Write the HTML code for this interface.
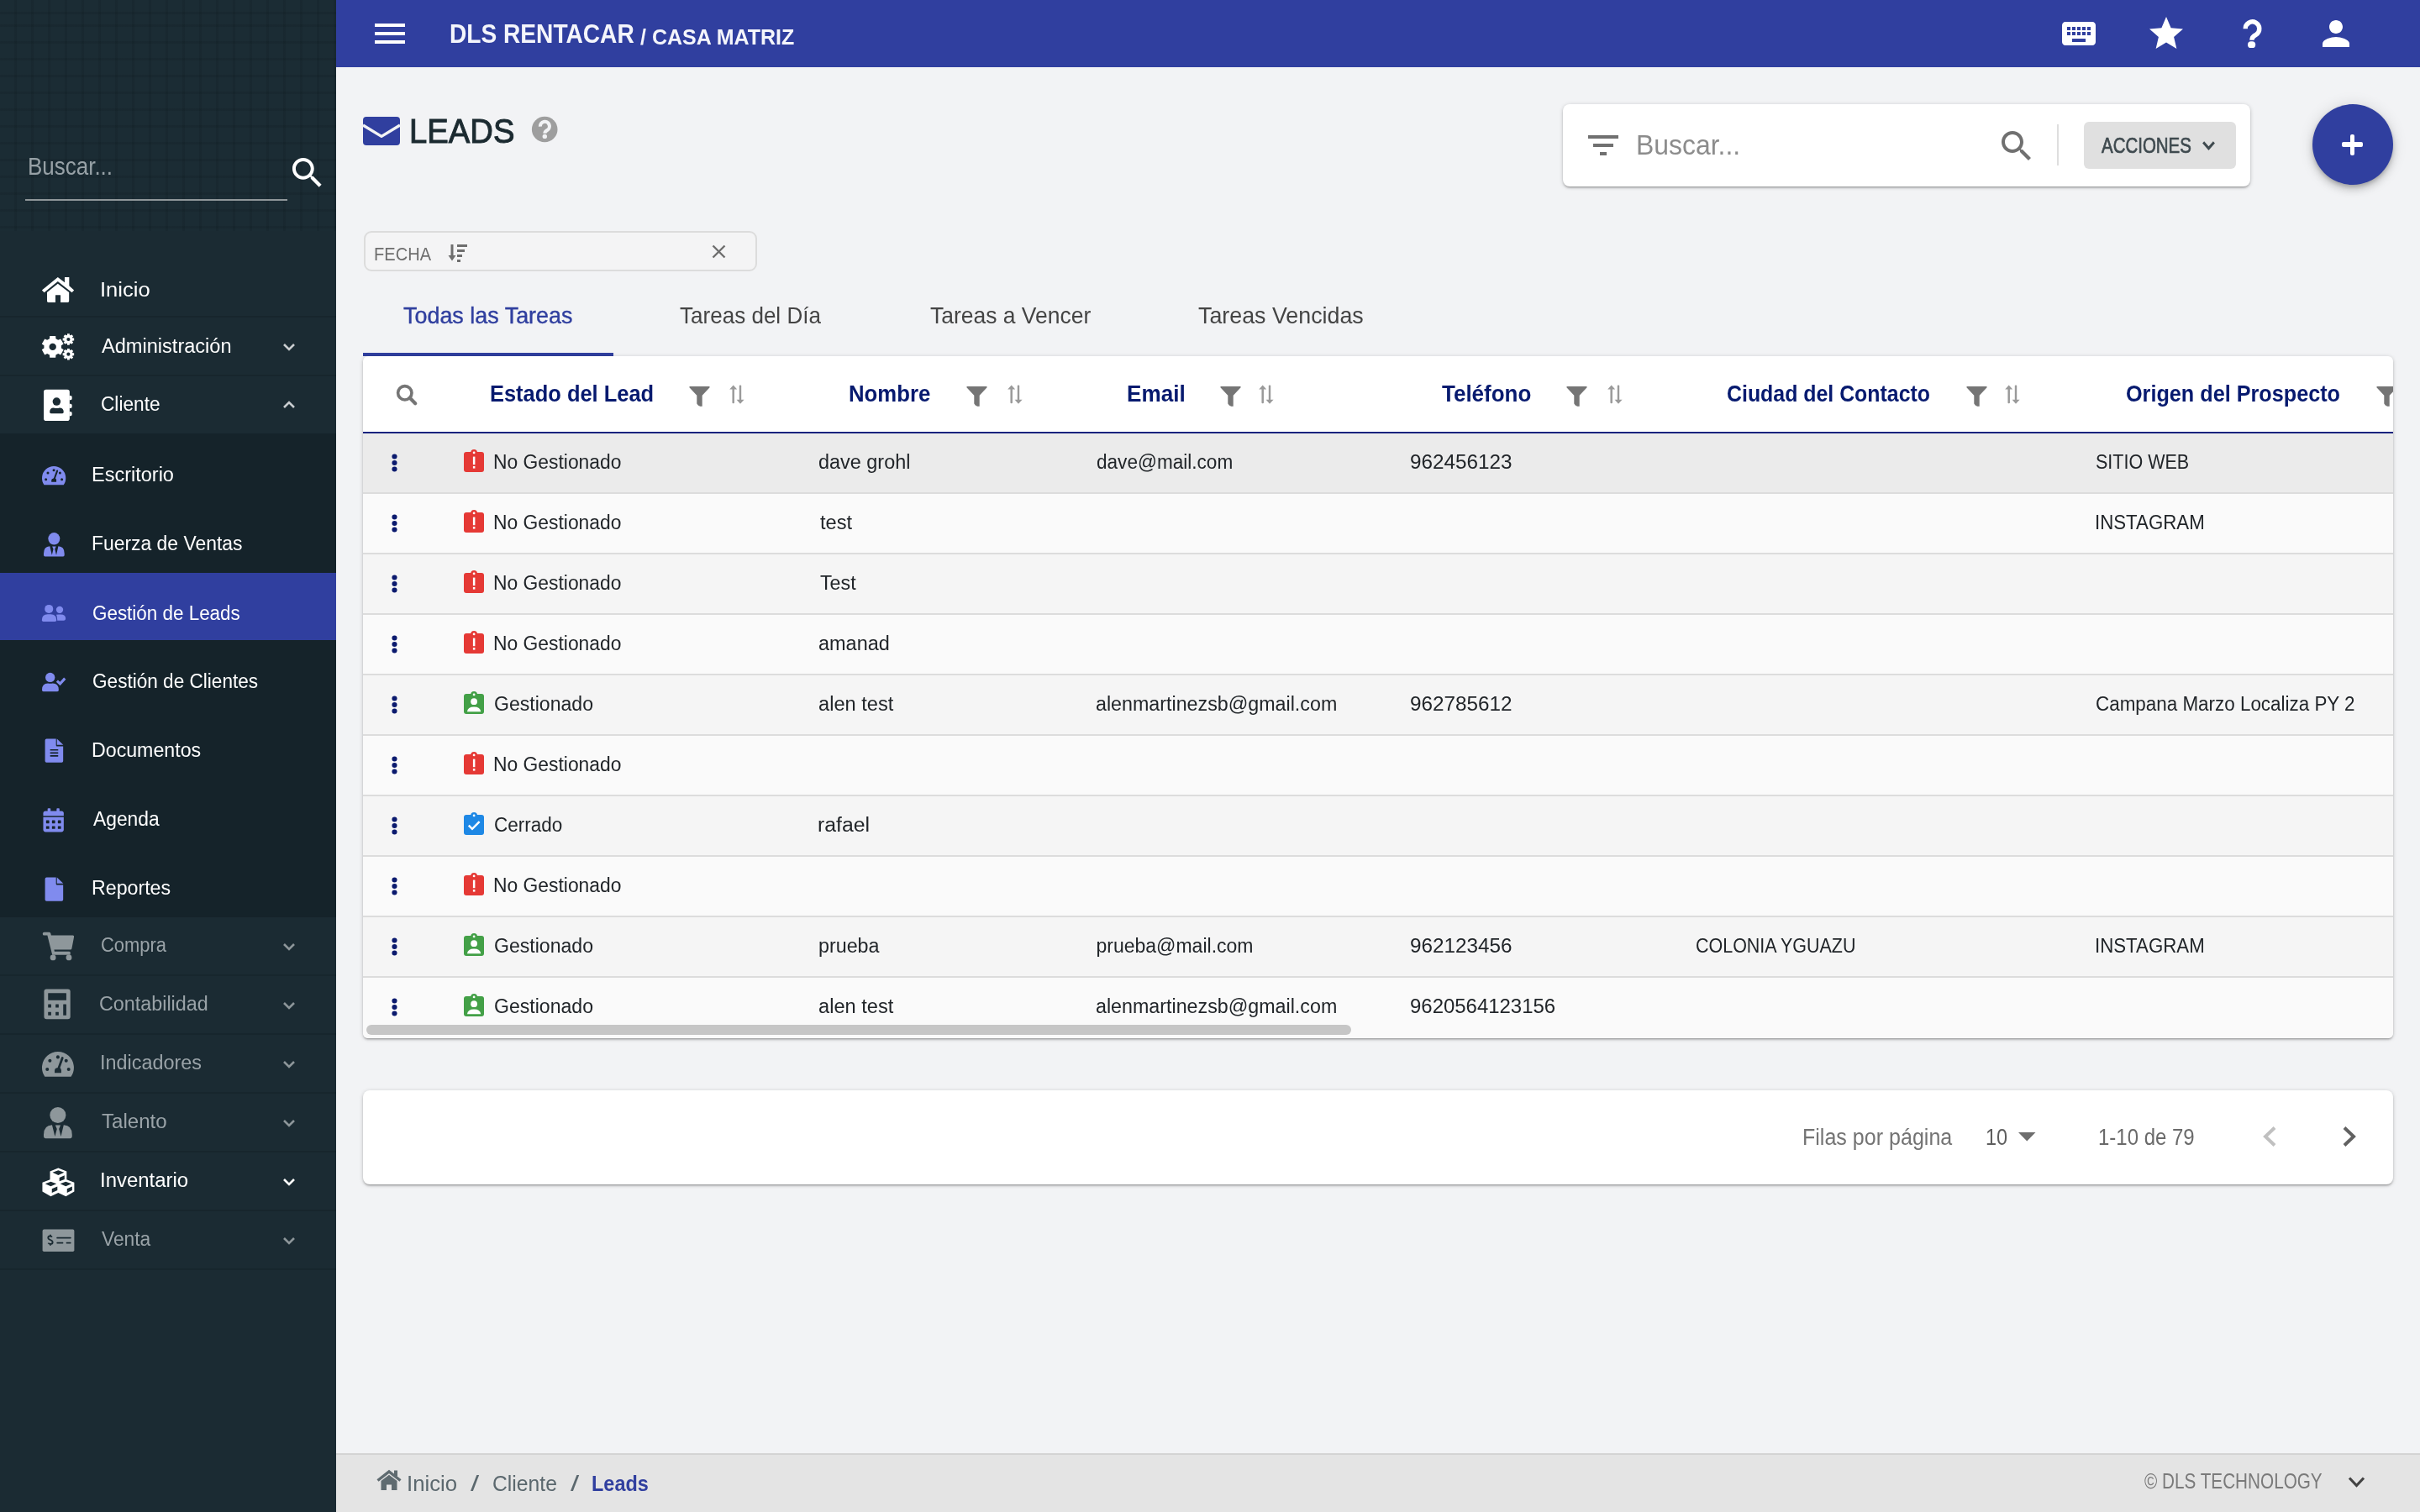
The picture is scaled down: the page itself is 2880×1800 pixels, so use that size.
<!DOCTYPE html>
<html><head><meta charset="utf-8"><title>Leads</title>
<style>
html,body{margin:0;padding:0;}
body{width:2880px;height:1800px;overflow:hidden;position:relative;background:#f2f3f5;font-family:"Liberation Sans",sans-serif;}
.b{position:absolute;}
.i{position:absolute;overflow:visible;}
.t{position:absolute;white-space:nowrap;transform-origin:0 0;}
</style></head><body>
<div class="b" style="left:0px;top:0px;width:400px;height:1800px;background:#1b2b33"></div>
<div class="b" style="left:0px;top:0px;width:400px;height:275px;background-color:#1b2c34;background-image:repeating-linear-gradient(90deg, rgba(10,20,25,0.16) 0 3px, transparent 3px 20px),repeating-linear-gradient(0deg, rgba(10,20,25,0.16) 0 3px, transparent 3px 20px);background-position:17px 17px"></div>
<div class="b" style="left:30px;top:237px;width:312px;height:2px;background:#8f9699"></div>
<svg class="i" style="left:341.8px;top:181.5px;width:47.6px;height:47.6px;" viewBox="0 0 24 24" preserveAspectRatio="none"><path fill="#fff" d="M15.5 14h-.79l-.28-.27C15.41 12.59 16 11.11 16 9.5 16 5.91 13.09 3 9.5 3S3 5.91 3 9.5 5.91 16 9.5 16c1.61 0 3.09-.59 4.23-1.57l.27.28v.79l5 4.99L20.49 19l-4.99-5zm-6 0C7.01 14 5 11.99 5 9.5S7.01 5 9.5 5 14 7.01 14 9.5 11.99 14 9.5 14z"/></svg>
<div class="b" style="left:0px;top:376px;width:400px;height:2px;background:#17262d"></div>
<div class="b" style="left:0px;top:446px;width:400px;height:2px;background:#17262d"></div>
<div class="b" style="left:0px;top:1160px;width:400px;height:2px;background:#17262d"></div>
<div class="b" style="left:0px;top:1230px;width:400px;height:2px;background:#17262d"></div>
<div class="b" style="left:0px;top:1300px;width:400px;height:2px;background:#17262d"></div>
<div class="b" style="left:0px;top:1370px;width:400px;height:2px;background:#17262d"></div>
<div class="b" style="left:0px;top:1440px;width:400px;height:2px;background:#17262d"></div>
<div class="b" style="left:0px;top:1510px;width:400px;height:2px;background:#17262d"></div>
<div class="b" style="left:0px;top:516px;width:400px;height:576px;background:#15232a"></div>
<div class="b" style="left:0px;top:682px;width:400px;height:80px;background:#303f9f"></div>
<svg class="i" style="left:336px;top:407.5px;width:16px;height:10px;" viewBox="0 0 16 10" preserveAspectRatio="none"><path d="M2 2 L8 8 L14 2" fill="none" stroke="#c9cdd0" stroke-width="2.6"/></svg>
<svg class="i" style="left:336px;top:477px;width:16px;height:10px;" viewBox="0 0 16 10" preserveAspectRatio="none"><path d="M2 8 L8 2 L14 8" fill="none" stroke="#c9cdd0" stroke-width="2.6"/></svg>
<svg class="i" style="left:336px;top:1121.5px;width:16px;height:10px;" viewBox="0 0 16 10" preserveAspectRatio="none"><path d="M2 2 L8 8 L14 2" fill="none" stroke="#8d969a" stroke-width="2.6"/></svg>
<svg class="i" style="left:336px;top:1191.5px;width:16px;height:10px;" viewBox="0 0 16 10" preserveAspectRatio="none"><path d="M2 2 L8 8 L14 2" fill="none" stroke="#8d969a" stroke-width="2.6"/></svg>
<svg class="i" style="left:336px;top:1261.5px;width:16px;height:10px;" viewBox="0 0 16 10" preserveAspectRatio="none"><path d="M2 2 L8 8 L14 2" fill="none" stroke="#8d969a" stroke-width="2.6"/></svg>
<svg class="i" style="left:336px;top:1331.5px;width:16px;height:10px;" viewBox="0 0 16 10" preserveAspectRatio="none"><path d="M2 2 L8 8 L14 2" fill="none" stroke="#8d969a" stroke-width="2.6"/></svg>
<svg class="i" style="left:336px;top:1401.5px;width:16px;height:10px;" viewBox="0 0 16 10" preserveAspectRatio="none"><path d="M2 2 L8 8 L14 2" fill="none" stroke="#ffffff" stroke-width="2.6"/></svg>
<svg class="i" style="left:336px;top:1471.5px;width:16px;height:10px;" viewBox="0 0 16 10" preserveAspectRatio="none"><path d="M2 2 L8 8 L14 2" fill="none" stroke="#8d969a" stroke-width="2.6"/></svg>
<svg class="i" style="left:48.929px;top:328.929px;width:40.179px;height:32.143px;" viewBox="300 300 1350 1080" preserveAspectRatio="none"><path fill="#ffffff" d="M 330 855 L 965 335 L 1240 540 V 335 H 1420 V 680 L 1615 855 L 1530 950 L 965 505 L 420 950 Z"/><path fill="#ffffff" d="M 535 935 L 965 590 L 1415 935 V 1290 Q 1415 1340 1365 1340 H 1075 V 1060 Q 1075 1045 1060 1045 H 885 Q 870 1045 870 1060 V 1340 H 585 Q 535 1340 535 1290 Z"/></svg>
<svg class="i" style="left:46px;top:394px;width:44px;height:38px;" viewBox="46 394 44 38" preserveAspectRatio="none"><path fill="#ffffff" fill-rule="evenodd" d="M66.43 403.19 L66.17 399.96 L59.23 399.96 L58.97 403.19 L56.16 404.82 L53.22 403.42 L49.76 409.43 L52.43 411.27 L52.43 414.53 L49.76 416.37 L53.22 422.38 L56.16 420.98 L58.97 422.61 L59.23 425.84 L66.17 425.84 L66.43 422.61 L69.24 420.98 L72.18 422.38 L75.64 416.37 L72.97 414.53 L72.97 411.27 L75.64 409.43 L72.18 403.42 L69.24 404.82 Z M 62.7 412.9 m -4.2 0 a 4.2 4.2 0 1 0 8.4 0 a 4.2 4.2 0 1 0 -8.4 0 Z"/><path fill="#ffffff" fill-rule="evenodd" d="M82.86 398.91 L82.83 397.25 L79.97 397.25 L79.94 398.91 L78.83 399.36 L77.64 398.21 L75.61 400.24 L76.76 401.43 L76.31 402.54 L74.65 402.57 L74.65 405.43 L76.31 405.46 L76.76 406.57 L75.61 407.76 L77.64 409.79 L78.83 408.64 L79.94 409.09 L79.97 410.75 L82.83 410.75 L82.86 409.09 L83.97 408.64 L85.16 409.79 L87.19 407.76 L86.04 406.57 L86.49 405.46 L88.15 405.43 L88.15 402.57 L86.49 402.54 L86.04 401.43 L87.19 400.24 L85.16 398.21 L83.97 399.36 Z M 81.4 404 m -2.1 0 a 2.1 2.1 0 1 0 4.2 0 a 2.1 2.1 0 1 0 -4.2 0 Z"/><path fill="#ffffff" fill-rule="evenodd" d="M82.86 416.61 L82.83 414.95 L79.97 414.95 L79.94 416.61 L78.83 417.06 L77.64 415.91 L75.61 417.94 L76.76 419.13 L76.31 420.24 L74.65 420.27 L74.65 423.13 L76.31 423.16 L76.76 424.27 L75.61 425.46 L77.64 427.49 L78.83 426.34 L79.94 426.79 L79.97 428.45 L82.83 428.45 L82.86 426.79 L83.97 426.34 L85.16 427.49 L87.19 425.46 L86.04 424.27 L86.49 423.16 L88.15 423.13 L88.15 420.27 L86.49 420.24 L86.04 419.13 L87.19 417.94 L85.16 415.91 L83.97 417.06 Z M 81.4 421.7 m -2.1 0 a 2.1 2.1 0 1 0 4.2 0 a 2.1 2.1 0 1 0 -4.2 0 Z"/></svg>
<svg class="i" style="left:51.310px;top:462.976px;width:35.714px;height:38.988px;" viewBox="380 100 1200 1310" preserveAspectRatio="none"><rect x="415" y="125" width="1035" height="1255" rx="95" fill="#ffffff"/><path fill="#ffffff" d="M1440 365 H1490 Q1545 365 1545 420 V490 Q1545 545 1490 545 H1440 Z M1440 700 H1490 Q1545 700 1545 755 V815 Q1545 870 1490 870 H1440 Z M1440 1010 H1490 Q1545 1010 1545 1065 V1125 Q1545 1180 1490 1180 H1440 Z"/><circle cx="930" cy="605" r="160" fill="#1b2b33"/><path fill="#1b2b33" d="M 655 1010 Q 655 860 815 855 Q 930 895 1045 855 Q 1210 860 1210 1010 V 1030 Q 1210 1080 1160 1080 H 705 Q 655 1080 655 1030 Z"/></svg>
<svg class="i" style="left:49.820px;top:554.820px;width:28.270px;height:22.320px;" viewBox="335 305 1275 1000" preserveAspectRatio="none"><path fill="#808bee" d="M 448 1305 A 637.5 637.5 0 1 1 1496 1305 Z"/><g fill="#15232a"><circle cx="545" cy="1010" r="68"/><circle cx="650" cy="665" r="68"/><circle cx="970" cy="520" r="68"/><circle cx="1300" cy="665" r="68"/><circle cx="1400" cy="1010" r="68"/></g><path d="M 990 1000 L 1150 555" stroke="#15232a" stroke-width="92" stroke-linecap="round"/><path fill="#15232a" d="M 840 1150 V 1060 Q 840 960 950 950 H 1060 Q 1105 990 1105 1060 V 1150 Z"/></svg>
<svg class="i" style="left:49.970px;top:1252.080px;width:37.950px;height:29.760px;" viewBox="335 305 1275 1000" preserveAspectRatio="none"><path fill="#8e979b" d="M 448 1305 A 637.5 637.5 0 1 1 1496 1305 Z"/><g fill="#1b2b33"><circle cx="545" cy="1010" r="68"/><circle cx="650" cy="665" r="68"/><circle cx="970" cy="520" r="68"/><circle cx="1300" cy="665" r="68"/><circle cx="1400" cy="1010" r="68"/></g><path d="M 990 1000 L 1150 555" stroke="#1b2b33" stroke-width="92" stroke-linecap="round"/><path fill="#1b2b33" d="M 840 1150 V 1060 Q 840 960 950 950 H 1060 Q 1105 990 1105 1060 V 1150 Z"/></svg>
<svg class="i" style="left:51.600px;top:633.600px;width:24.700px;height:28.450px;" viewBox="405 160 1135 1250" preserveAspectRatio="none"><circle cx="972" cy="480" r="320" fill="#808bee"/><path fill="#808bee" d="M 405 1340 V 1260 Q 405 890 740 875 L 855 1340 L 935 1030 L 870 880 H 1080 L 1015 1030 L 1095 1340 L 1205 875 Q 1540 890 1540 1260 V 1340 Q 1540 1410 1470 1410 H 475 Q 405 1410 405 1340 Z"/></svg>
<svg class="i" style="left:52.050px;top:1317.760px;width:33.780px;height:37.200px;" viewBox="405 160 1135 1250" preserveAspectRatio="none"><circle cx="972" cy="480" r="320" fill="#8e979b"/><path fill="#8e979b" d="M 405 1340 V 1260 Q 405 890 740 875 L 855 1340 L 935 1030 L 870 880 H 1080 L 1015 1030 L 1095 1340 L 1205 875 Q 1540 890 1540 1260 V 1340 Q 1540 1410 1470 1410 H 475 Q 405 1410 405 1340 Z"/></svg>
<svg class="i" style="left:48.929px;top:719.012px;width:30.060px;height:22.024px;" viewBox="300 370 1010 740" preserveAspectRatio="none"><circle cx="610" cy="570" r="170" fill="#808bee"/><circle cx="1040" cy="600" r="140" fill="#808bee"/><path fill="#808bee" d="M 330 1010 Q 330 780 560 780 H 680 Q 910 780 910 1010 V 1020 Q 910 1075 855 1075 H 385 Q 330 1075 330 1020 Z"/><path fill="#808bee" d="M 905 800 Q 960 790 1000 790 H 1080 Q 1280 790 1280 960 Q 1280 1030 1210 1030 H 945 V 1000 Q 945 880 905 800 Z"/></svg>
<svg class="i" style="left:48.929px;top:799.821px;width:30.060px;height:24.107px;" viewBox="300 330 1010 810" preserveAspectRatio="none"><circle cx="660" cy="545" r="190" fill="#808bee"/><path fill="#808bee" d="M 335 1030 Q 335 790 570 780 Q 660 800 760 780 Q 1000 790 1000 1030 V 1050 Q 1000 1115 935 1115 H 400 Q 335 1115 335 1050 Z"/><path d="M 935 690 L 1055 800 L 1250 585" fill="none" stroke="#808bee" stroke-width="105"/></svg>
<svg class="i" style="left:52.500px;top:879.226px;width:23.214px;height:29.464px;" viewBox="420 310 780 990" preserveAspectRatio="none"><path fill="#808bee" d="M 440 390 Q 440 330 500 330 H 880 V 590 Q 880 630 920 630 H 1165 V 1220 Q 1165 1280 1105 1280 H 500 Q 440 1280 440 1220 Z"/><path fill="#808bee" d="M 915 330 L 1170 572 H 915 Z"/><g fill="#15232a"><rect x="640" y="745" width="330" height="55" rx="20"/><rect x="640" y="865" width="330" height="55" rx="20"/><rect x="640" y="985" width="330" height="55" rx="20"/></g></svg>
<svg class="i" style="left:51.310px;top:961.631px;width:25.298px;height:28.869px;" viewBox="380 290 850 970" preserveAspectRatio="none"><rect x="570" y="300" width="120" height="150" rx="25" fill="#808bee"/><rect x="930" y="300" width="115" height="150" rx="25" fill="#808bee"/><path fill="#808bee" d="M 395 600 V 500 Q 395 410 490 410 H 1120 Q 1215 410 1215 500 V 600 Z"/><path fill="#808bee" d="M 395 650 H 1215 V 1150 Q 1215 1245 1120 1245 H 490 Q 395 1245 395 1150 Z"/><g fill="#15232a"><rect x="510" y="780" width="125" height="120" rx="15"/><rect x="745" y="780" width="125" height="120" rx="15"/><rect x="980" y="780" width="125" height="120" rx="15"/><rect x="510" y="1010" width="125" height="115" rx="15"/><rect x="745" y="1010" width="125" height="115" rx="15"/><rect x="980" y="1010" width="125" height="115" rx="15"/></g></svg>
<svg class="i" style="left:52.500px;top:1044.226px;width:23.214px;height:29.464px;" viewBox="420 310 780 990" preserveAspectRatio="none"><path fill="#808bee" d="M 440 390 Q 440 330 500 330 H 880 V 590 Q 880 630 920 630 H 1165 V 1220 Q 1165 1280 1105 1280 H 500 Q 440 1280 440 1220 Z"/><path fill="#808bee" d="M 915 330 L 1170 572 H 915 Z"/></svg>
<svg class="i" style="left:49.524px;top:1109.464px;width:38.988px;height:35.119px;" viewBox="320 150 1310 1180" preserveAspectRatio="none"><path fill="#8e979b" d="M 345 240 Q 345 175 410 175 H 610 Q 660 175 670 230 L 685 300 H 1555 Q 1610 300 1600 360 L 1510 830 Q 1500 870 1460 870 H 805 L 820 950 H 1405 Q 1470 950 1455 1020 L 1445 1080 H 730 L 535 305 H 410 Q 345 305 345 240 Z"/><circle cx="760" cy="1190" r="115" fill="#8e979b"/><circle cx="1395" cy="1190" r="115" fill="#8e979b"/></svg>
<svg class="i" style="left:51.905px;top:1177.464px;width:32.440px;height:36.905px;" viewBox="400 150 1090 1240" preserveAspectRatio="none"><rect x="415" y="170" width="1050" height="1200" rx="100" fill="#8e979b"/><g fill="#1b2b33"><rect x="575" y="330" width="730" height="280" rx="10"/><rect x="575" y="775" width="125" height="135" rx="10"/><rect x="875" y="775" width="125" height="135" rx="10"/><rect x="575" y="1080" width="125" height="135" rx="10"/><rect x="875" y="1080" width="125" height="135" rx="10"/><rect x="1180" y="775" width="125" height="440" rx="10"/></g></svg>
<svg class="i" style="left:49.524px;top:1389.655px;width:38.988px;height:34.821px;" viewBox="320 190 1310 1170" preserveAspectRatio="none"><path fill="#ffffff" fill-rule="evenodd" d="M 335 790 L 640 665 V 340 L 970 205 L 1305 340 V 665 L 1610 790 V 1150 L 1275 1340 L 970 1200 L 670 1340 L 335 1150 Z M 740 385 L 970 300 L 1205 385 L 970 490 Z M 1015 590 L 1220 505 V 660 L 1015 735 Z M 445 840 L 670 750 L 900 840 L 670 935 Z M 715 1035 L 935 945 V 1100 L 715 1200 Z M 1045 840 L 1270 750 L 1500 840 L 1270 935 Z M 1320 1035 L 1525 945 V 1100 L 1320 1200 Z"/></svg>
<svg class="i" style="left:49.524px;top:1463.226px;width:38.988px;height:27.679px;" viewBox="320 310 1310 930" preserveAspectRatio="none"><rect x="340" y="330" width="1270" height="885" rx="60" fill="#8e979b"/><path d="M 720 640 Q 690 595 640 595 Q 565 595 565 665 Q 565 720 655 750 Q 745 780 745 845 Q 745 915 650 915 Q 595 915 570 870 M 655 540 V 600 M 655 910 V 970" fill="none" stroke="#1b2b33" stroke-width="62"/><g fill="#1b2b33"><rect x="905" y="640" width="575" height="60" rx="15"/><rect x="905" y="840" width="265" height="60" rx="15"/><rect x="1285" y="840" width="195" height="60" rx="15"/></g></svg>
<div class="b" style="left:400px;top:0px;width:2480px;height:80px;background:#303f9f"></div>
<div class="b" style="left:446px;top:28px;width:36px;height:4px;background:#fff"></div>
<div class="b" style="left:446px;top:38px;width:36px;height:4px;background:#fff"></div>
<div class="b" style="left:446px;top:48px;width:36px;height:4px;background:#fff"></div>
<svg class="i" style="left:2450px;top:16px;width:48px;height:48px;" viewBox="0 0 24 24" preserveAspectRatio="none"><path fill="#fff" d="M20 5H4c-1.1 0-1.99.9-1.99 2L2 17c0 1.1.9 2 2 2h16c1.1 0 2-.9 2-2V7c0-1.1-.9-2-2-2zm-9 3h2v2h-2V8zm0 3h2v2h-2v-2zM8 8h2v2H8V8zm0 3h2v2H8v-2zm-1 2H5v-2h2v2zm0-3H5V8h2v2zm9 7H8v-2h8v2zm0-4h-2v-2h2v2zm0-3h-2V8h2v2zm3 3h-2v-2h2v2zm0-3h-2V8h2v2z"/></svg>
<svg class="i" style="left:2554px;top:16px;width:48px;height:48px;" viewBox="0 0 24 24" preserveAspectRatio="none"><path fill="#fff" d="M12 17.27L18.18 21l-1.64-7.03L22 9.24l-7.19-.61L12 2 9.19 8.63 2 9.24l5.46 4.73L5.82 21z"/></svg>
<svg class="i" style="left:2660px;top:18px;width:40px;height:44px;" viewBox="2660 18 40 44" preserveAspectRatio="none"><path d="M2672.2 34.2 A8.3 8.3 0 1 1 2685 41.2 Q2679.9 43.6 2679.9 47.8" fill="none" stroke="#fff" stroke-width="5.4"/><rect x="2675" y="49.2" width="9.2" height="7.9" rx="3.9" fill="#fff"/></svg>
<svg class="i" style="left:2756px;top:16px;width:48px;height:48px;" viewBox="0 0 24 24" preserveAspectRatio="none"><path fill="#fff" d="M12 12c2.21 0 4-1.79 4-4s-1.79-4-4-4-4 1.79-4 4 1.79 4 4 4zm0 2c-2.67 0-8 1.34-8 4v2h16v-2c0-2.66-5.33-4-8-4z"/></svg>
<svg class="i" style="left:432px;top:139px;width:44px;height:34px;" viewBox="0 0 44 34" preserveAspectRatio="none"><rect x="0" y="0" width="44" height="34" rx="4" fill="#303f9f"/><path d="M0 10 L22 23.4 L44 10" fill="none" stroke="#f2f3f5" stroke-width="3.4" stroke-linejoin="round"/></svg>
<svg class="i" style="left:630px;top:136px;width:36px;height:36px;" viewBox="630 136 36 36" preserveAspectRatio="none"><circle cx="648.2" cy="154" r="15.3" fill="#9e9e9e"/><path d="M642.9 150.6 A5.5 5.5 0 1 1 651.4 154.9 Q648.4 156.5 648.4 158.8" fill="none" stroke="#f2f3f5" stroke-width="4.1"/><circle cx="648.3" cy="162.4" r="2.7" fill="#f2f3f5"/></svg>
<div class="b" style="left:1860px;top:124px;width:818px;height:98px;background:#fff;border-radius:8px;box-shadow:0 1px 5px rgba(0,0,0,0.2),0 2px 2px rgba(0,0,0,0.14),0 3px 1px -2px rgba(0,0,0,0.12)"></div>
<svg class="i" style="left:1884px;top:149px;width:48px;height:48px;" viewBox="0 0 24 24" preserveAspectRatio="none"><path fill="#707070" d="M10 18h4v-2h-4v2zM3 6v2h18V6H3zm3 7h12v-2H6v2z"/></svg>
<svg class="i" style="left:2376px;top:150px;width:48px;height:48px;" viewBox="0 0 24 24" preserveAspectRatio="none"><path fill="#707070" d="M15.5 14h-.79l-.28-.27C15.41 12.59 16 11.11 16 9.5 16 5.91 13.09 3 9.5 3S3 5.91 3 9.5 5.91 16 9.5 16c1.61 0 3.09-.59 4.23-1.57l.27.28v.79l5 4.99L20.49 19l-4.99-5zm-6 0C7.01 14 5 11.99 5 9.5S7.01 5 9.5 5 14 7.01 14 9.5 11.99 14 9.5 14z"/></svg>
<div class="b" style="left:2447.5px;top:148px;width:2px;height:49px;background:#dedede"></div>
<div class="b" style="left:2479.5px;top:145px;width:181px;height:56px;background:#e0e0e0;border-radius:6px"></div>
<svg class="i" style="left:2620px;top:167px;width:17px;height:12px;" viewBox="0 0 16 10" preserveAspectRatio="none"><path d="M2 2 L8 8 L14 2" fill="none" stroke="#3f4a4f" stroke-width="2.8"/></svg>
<div class="b" style="left:2752px;top:124px;width:96px;height:96px;background:#303f9f;border-radius:50%;box-shadow:0 3px 5px -1px rgba(0,0,0,0.2),0 6px 10px rgba(0,0,0,0.14),0 1px 18px rgba(0,0,0,0.12)"></div>
<div class="b" style="left:2787px;top:169.3px;width:25px;height:5.4px;background:#fff;border-radius:2px"></div>
<div class="b" style="left:2796.8px;top:159.5px;width:5.4px;height:25px;background:#fff;border-radius:2px"></div>
<div class="b" style="left:432.5px;top:274.5px;width:468.5px;height:48.5px;box-sizing:border-box;border:2px solid #dcdcdc;border-radius:9px;background:#f4f4f5"></div>
<svg class="i" style="left:533px;top:290px;width:25px;height:22px;" viewBox="0 0 25 22" preserveAspectRatio="none"><path d="M5 1 V17" stroke="#6e6e6e" stroke-width="3"/><path d="M0.5 14 L5 20.5 L9.5 14 Z" fill="#6e6e6e"/><rect x="11" y="1" width="12" height="3" fill="#6e6e6e"/><rect x="11" y="7" width="9" height="3" fill="#6e6e6e"/><rect x="11" y="13" width="6" height="3" fill="#6e6e6e"/><rect x="11" y="19" width="4" height="3" fill="#6e6e6e"/></svg>
<svg class="i" style="left:846.5px;top:291px;width:17px;height:17px;" viewBox="0 0 17 17" preserveAspectRatio="none"><path d="M1.5 1.5 L15.5 15.5 M15.5 1.5 L1.5 15.5" stroke="#6e6e6e" stroke-width="2.4"/></svg>
<div class="b" style="left:432px;top:420px;width:298px;height:4px;background:#303f9f"></div>
<div class="b" style="left:432px;top:424px;width:2416px;height:812px;background:#fff;border-radius:6px;box-shadow:0 1px 5px rgba(0,0,0,0.2),0 2px 2px rgba(0,0,0,0.14),0 3px 1px -2px rgba(0,0,0,0.12);overflow:hidden"></div>
<div class="b" style="left:432px;top:514px;width:2416px;height:2px;background:#14237e"></div>
<div class="b" style="left:432px;top:516px;width:2416px;height:70px;background:#ebebeb"></div>
<div class="b" style="left:432px;top:586px;width:2416px;height:2px;background:#dcdcdc"></div>
<div class="b" style="left:432px;top:588px;width:2416px;height:70px;background:#fafafa"></div>
<div class="b" style="left:432px;top:658px;width:2416px;height:2px;background:#dcdcdc"></div>
<div class="b" style="left:432px;top:660px;width:2416px;height:70px;background:#f5f5f5"></div>
<div class="b" style="left:432px;top:730px;width:2416px;height:2px;background:#dcdcdc"></div>
<div class="b" style="left:432px;top:732px;width:2416px;height:70px;background:#fafafa"></div>
<div class="b" style="left:432px;top:802px;width:2416px;height:2px;background:#dcdcdc"></div>
<div class="b" style="left:432px;top:804px;width:2416px;height:70px;background:#f5f5f5"></div>
<div class="b" style="left:432px;top:874px;width:2416px;height:2px;background:#dcdcdc"></div>
<div class="b" style="left:432px;top:876px;width:2416px;height:70px;background:#fafafa"></div>
<div class="b" style="left:432px;top:946px;width:2416px;height:2px;background:#dcdcdc"></div>
<div class="b" style="left:432px;top:948px;width:2416px;height:70px;background:#f5f5f5"></div>
<div class="b" style="left:432px;top:1018px;width:2416px;height:2px;background:#dcdcdc"></div>
<div class="b" style="left:432px;top:1020px;width:2416px;height:70px;background:#fafafa"></div>
<div class="b" style="left:432px;top:1090px;width:2416px;height:2px;background:#dcdcdc"></div>
<div class="b" style="left:432px;top:1092px;width:2416px;height:70px;background:#f5f5f5"></div>
<div class="b" style="left:432px;top:1162px;width:2416px;height:2px;background:#dcdcdc"></div>
<div class="b" style="left:432px;top:1164px;width:2416px;height:72px;background:#fafafa;border-radius:0 0 6px 6px"></div>
<div class="b" style="left:436px;top:1220px;width:1172px;height:12px;background:#c6c6c6;border-radius:6px"></div>
<svg class="i" style="left:470px;top:456px;width:28px;height:28px;" viewBox="0 0 28 28" preserveAspectRatio="none"><circle cx="11.8" cy="11.8" r="8.2" fill="none" stroke="#757575" stroke-width="3.6"/><path d="M17.8 17.8 L24.2 24.2" stroke="#757575" stroke-width="4.2" stroke-linecap="round"/></svg>
<svg class="i" style="left:820px;top:460px;width:25px;height:24px;" viewBox="820 460 25 24" preserveAspectRatio="none"><path d="M820.4 461.3 Q819.9 460 821.4 460 H843.6 Q845.1 460 844.6 461.3 L835.7 470.8 V483.7 H833.2 Q830.3 483 829.3 480.6 V470.8 Z" fill="#757575"/></svg>
<svg class="i" style="left:1150px;top:460px;width:25px;height:24px;" viewBox="820 460 25 24" preserveAspectRatio="none"><path d="M820.4 461.3 Q819.9 460 821.4 460 H843.6 Q845.1 460 844.6 461.3 L835.7 470.8 V483.7 H833.2 Q830.3 483 829.3 480.6 V470.8 Z" fill="#757575"/></svg>
<svg class="i" style="left:1452px;top:460px;width:25px;height:24px;" viewBox="820 460 25 24" preserveAspectRatio="none"><path d="M820.4 461.3 Q819.9 460 821.4 460 H843.6 Q845.1 460 844.6 461.3 L835.7 470.8 V483.7 H833.2 Q830.3 483 829.3 480.6 V470.8 Z" fill="#757575"/></svg>
<svg class="i" style="left:1863.75px;top:460px;width:25px;height:24px;" viewBox="820 460 25 24" preserveAspectRatio="none"><path d="M820.4 461.3 Q819.9 460 821.4 460 H843.6 Q845.1 460 844.6 461.3 L835.7 470.8 V483.7 H833.2 Q830.3 483 829.3 480.6 V470.8 Z" fill="#757575"/></svg>
<svg class="i" style="left:2340px;top:460px;width:25px;height:24px;" viewBox="820 460 25 24" preserveAspectRatio="none"><path d="M820.4 461.3 Q819.9 460 821.4 460 H843.6 Q845.1 460 844.6 461.3 L835.7 470.8 V483.7 H833.2 Q830.3 483 829.3 480.6 V470.8 Z" fill="#757575"/></svg>
<div class="b" style="left:2827.5px;top:460px;width:20.5px;height:24px;overflow:hidden"><svg class="i" style="left:0px;top:0px;width:25px;height:24px;" viewBox="820 460 25 24" preserveAspectRatio="none"><path d="M820.4 461.3 Q819.9 460 821.4 460 H843.6 Q845.1 460 844.6 461.3 L835.7 470.8 V483.7 H833.2 Q830.3 483 829.3 480.6 V470.8 Z" fill="#757575"/></svg></div>
<svg class="i" style="left:868px;top:457.5px;width:18px;height:23px;" viewBox="868 457.5 18 23" preserveAspectRatio="none"><g fill="#9a9a9a"><path d="M868.2 463 L872.7 457.9 L877.2 463 Z"/><rect x="871.45" y="462" width="2.5" height="17.8" rx="1"/><path d="M876.6 475.2 L881 480.2 L885.6 475.2 Z"/><rect x="879.8" y="457.9" width="2.4" height="18" rx="1"/></g></svg>
<svg class="i" style="left:1198.75px;top:457.5px;width:18px;height:23px;" viewBox="868 457.5 18 23" preserveAspectRatio="none"><g fill="#9a9a9a"><path d="M868.2 463 L872.7 457.9 L877.2 463 Z"/><rect x="871.45" y="462" width="2.5" height="17.8" rx="1"/><path d="M876.6 475.2 L881 480.2 L885.6 475.2 Z"/><rect x="879.8" y="457.9" width="2.4" height="18" rx="1"/></g></svg>
<svg class="i" style="left:1497.5px;top:457.5px;width:18px;height:23px;" viewBox="868 457.5 18 23" preserveAspectRatio="none"><g fill="#9a9a9a"><path d="M868.2 463 L872.7 457.9 L877.2 463 Z"/><rect x="871.45" y="462" width="2.5" height="17.8" rx="1"/><path d="M876.6 475.2 L881 480.2 L885.6 475.2 Z"/><rect x="879.8" y="457.9" width="2.4" height="18" rx="1"/></g></svg>
<svg class="i" style="left:1912.5px;top:457.5px;width:18px;height:23px;" viewBox="868 457.5 18 23" preserveAspectRatio="none"><g fill="#9a9a9a"><path d="M868.2 463 L872.7 457.9 L877.2 463 Z"/><rect x="871.45" y="462" width="2.5" height="17.8" rx="1"/><path d="M876.6 475.2 L881 480.2 L885.6 475.2 Z"/><rect x="879.8" y="457.9" width="2.4" height="18" rx="1"/></g></svg>
<svg class="i" style="left:2386.25px;top:457.5px;width:18px;height:23px;" viewBox="868 457.5 18 23" preserveAspectRatio="none"><g fill="#9a9a9a"><path d="M868.2 463 L872.7 457.9 L877.2 463 Z"/><rect x="871.45" y="462" width="2.5" height="17.8" rx="1"/><path d="M876.6 475.2 L881 480.2 L885.6 475.2 Z"/><rect x="879.8" y="457.9" width="2.4" height="18" rx="1"/></g></svg>
<svg class="i" style="left:465.5px;top:539.5px;width:7px;height:22px;" viewBox="0 0 7 22" preserveAspectRatio="none"><circle cx="3.5" cy="3.5" r="3.05" fill="#0b1a6e"/><circle cx="3.5" cy="11" r="3.05" fill="#0b1a6e"/><circle cx="3.5" cy="18.5" r="3.05" fill="#0b1a6e"/></svg>
<svg class="i" style="left:552px;top:535px;width:24px;height:27.5px;" viewBox="0 0 24 27.5" preserveAspectRatio="none"><rect x="0" y="3" width="24" height="24" rx="3" fill="#e53935"/><circle cx="12.1" cy="3.9" r="3.9" fill="#e53935"/><circle cx="12.1" cy="3.9" r="1.4" fill="#fff"/><rect x="10.9" y="8.6" width="2.5" height="9.6" fill="#fff"/><rect x="10.9" y="20" width="2.5" height="2.6" fill="#fff"/></svg>
<svg class="i" style="left:465.5px;top:611.5px;width:7px;height:22px;" viewBox="0 0 7 22" preserveAspectRatio="none"><circle cx="3.5" cy="3.5" r="3.05" fill="#0b1a6e"/><circle cx="3.5" cy="11" r="3.05" fill="#0b1a6e"/><circle cx="3.5" cy="18.5" r="3.05" fill="#0b1a6e"/></svg>
<svg class="i" style="left:552px;top:607px;width:24px;height:27.5px;" viewBox="0 0 24 27.5" preserveAspectRatio="none"><rect x="0" y="3" width="24" height="24" rx="3" fill="#e53935"/><circle cx="12.1" cy="3.9" r="3.9" fill="#e53935"/><circle cx="12.1" cy="3.9" r="1.4" fill="#fff"/><rect x="10.9" y="8.6" width="2.5" height="9.6" fill="#fff"/><rect x="10.9" y="20" width="2.5" height="2.6" fill="#fff"/></svg>
<svg class="i" style="left:465.5px;top:683.5px;width:7px;height:22px;" viewBox="0 0 7 22" preserveAspectRatio="none"><circle cx="3.5" cy="3.5" r="3.05" fill="#0b1a6e"/><circle cx="3.5" cy="11" r="3.05" fill="#0b1a6e"/><circle cx="3.5" cy="18.5" r="3.05" fill="#0b1a6e"/></svg>
<svg class="i" style="left:552px;top:679px;width:24px;height:27.5px;" viewBox="0 0 24 27.5" preserveAspectRatio="none"><rect x="0" y="3" width="24" height="24" rx="3" fill="#e53935"/><circle cx="12.1" cy="3.9" r="3.9" fill="#e53935"/><circle cx="12.1" cy="3.9" r="1.4" fill="#fff"/><rect x="10.9" y="8.6" width="2.5" height="9.6" fill="#fff"/><rect x="10.9" y="20" width="2.5" height="2.6" fill="#fff"/></svg>
<svg class="i" style="left:465.5px;top:755.5px;width:7px;height:22px;" viewBox="0 0 7 22" preserveAspectRatio="none"><circle cx="3.5" cy="3.5" r="3.05" fill="#0b1a6e"/><circle cx="3.5" cy="11" r="3.05" fill="#0b1a6e"/><circle cx="3.5" cy="18.5" r="3.05" fill="#0b1a6e"/></svg>
<svg class="i" style="left:552px;top:751px;width:24px;height:27.5px;" viewBox="0 0 24 27.5" preserveAspectRatio="none"><rect x="0" y="3" width="24" height="24" rx="3" fill="#e53935"/><circle cx="12.1" cy="3.9" r="3.9" fill="#e53935"/><circle cx="12.1" cy="3.9" r="1.4" fill="#fff"/><rect x="10.9" y="8.6" width="2.5" height="9.6" fill="#fff"/><rect x="10.9" y="20" width="2.5" height="2.6" fill="#fff"/></svg>
<svg class="i" style="left:465.5px;top:827.5px;width:7px;height:22px;" viewBox="0 0 7 22" preserveAspectRatio="none"><circle cx="3.5" cy="3.5" r="3.05" fill="#0b1a6e"/><circle cx="3.5" cy="11" r="3.05" fill="#0b1a6e"/><circle cx="3.5" cy="18.5" r="3.05" fill="#0b1a6e"/></svg>
<svg class="i" style="left:552px;top:823px;width:24px;height:27.5px;" viewBox="0 0 24 27.5" preserveAspectRatio="none"><rect x="0" y="3" width="24" height="24" rx="3" fill="#43a047"/><circle cx="12.1" cy="3.9" r="3.9" fill="#43a047"/><circle cx="12.1" cy="3.9" r="1.4" fill="#fff"/><circle cx="12.1" cy="12.2" r="3.9" fill="#fff"/><path d="M4 24.3 Q4.5 18.4 12.1 18.4 Q19.7 18.4 20.2 24.3 Z" fill="#fff"/></svg>
<svg class="i" style="left:465.5px;top:899.5px;width:7px;height:22px;" viewBox="0 0 7 22" preserveAspectRatio="none"><circle cx="3.5" cy="3.5" r="3.05" fill="#0b1a6e"/><circle cx="3.5" cy="11" r="3.05" fill="#0b1a6e"/><circle cx="3.5" cy="18.5" r="3.05" fill="#0b1a6e"/></svg>
<svg class="i" style="left:552px;top:895px;width:24px;height:27.5px;" viewBox="0 0 24 27.5" preserveAspectRatio="none"><rect x="0" y="3" width="24" height="24" rx="3" fill="#e53935"/><circle cx="12.1" cy="3.9" r="3.9" fill="#e53935"/><circle cx="12.1" cy="3.9" r="1.4" fill="#fff"/><rect x="10.9" y="8.6" width="2.5" height="9.6" fill="#fff"/><rect x="10.9" y="20" width="2.5" height="2.6" fill="#fff"/></svg>
<svg class="i" style="left:465.5px;top:971.5px;width:7px;height:22px;" viewBox="0 0 7 22" preserveAspectRatio="none"><circle cx="3.5" cy="3.5" r="3.05" fill="#0b1a6e"/><circle cx="3.5" cy="11" r="3.05" fill="#0b1a6e"/><circle cx="3.5" cy="18.5" r="3.05" fill="#0b1a6e"/></svg>
<svg class="i" style="left:552px;top:967px;width:24px;height:27.5px;" viewBox="0 0 24 27.5" preserveAspectRatio="none"><rect x="0" y="3" width="24" height="24" rx="3" fill="#1e88e5"/><circle cx="12.1" cy="3.9" r="3.9" fill="#1e88e5"/><circle cx="12.1" cy="3.9" r="1.4" fill="#fff"/><path d="M5.8 15.6 L10 19.8 L18.6 11.2" fill="none" stroke="#fff" stroke-width="2.5"/></svg>
<svg class="i" style="left:465.5px;top:1043.5px;width:7px;height:22px;" viewBox="0 0 7 22" preserveAspectRatio="none"><circle cx="3.5" cy="3.5" r="3.05" fill="#0b1a6e"/><circle cx="3.5" cy="11" r="3.05" fill="#0b1a6e"/><circle cx="3.5" cy="18.5" r="3.05" fill="#0b1a6e"/></svg>
<svg class="i" style="left:552px;top:1039px;width:24px;height:27.5px;" viewBox="0 0 24 27.5" preserveAspectRatio="none"><rect x="0" y="3" width="24" height="24" rx="3" fill="#e53935"/><circle cx="12.1" cy="3.9" r="3.9" fill="#e53935"/><circle cx="12.1" cy="3.9" r="1.4" fill="#fff"/><rect x="10.9" y="8.6" width="2.5" height="9.6" fill="#fff"/><rect x="10.9" y="20" width="2.5" height="2.6" fill="#fff"/></svg>
<svg class="i" style="left:465.5px;top:1115.5px;width:7px;height:22px;" viewBox="0 0 7 22" preserveAspectRatio="none"><circle cx="3.5" cy="3.5" r="3.05" fill="#0b1a6e"/><circle cx="3.5" cy="11" r="3.05" fill="#0b1a6e"/><circle cx="3.5" cy="18.5" r="3.05" fill="#0b1a6e"/></svg>
<svg class="i" style="left:552px;top:1111px;width:24px;height:27.5px;" viewBox="0 0 24 27.5" preserveAspectRatio="none"><rect x="0" y="3" width="24" height="24" rx="3" fill="#43a047"/><circle cx="12.1" cy="3.9" r="3.9" fill="#43a047"/><circle cx="12.1" cy="3.9" r="1.4" fill="#fff"/><circle cx="12.1" cy="12.2" r="3.9" fill="#fff"/><path d="M4 24.3 Q4.5 18.4 12.1 18.4 Q19.7 18.4 20.2 24.3 Z" fill="#fff"/></svg>
<svg class="i" style="left:465.5px;top:1187.5px;width:7px;height:22px;" viewBox="0 0 7 22" preserveAspectRatio="none"><circle cx="3.5" cy="3.5" r="3.05" fill="#0b1a6e"/><circle cx="3.5" cy="11" r="3.05" fill="#0b1a6e"/><circle cx="3.5" cy="18.5" r="3.05" fill="#0b1a6e"/></svg>
<svg class="i" style="left:552px;top:1183px;width:24px;height:27.5px;" viewBox="0 0 24 27.5" preserveAspectRatio="none"><rect x="0" y="3" width="24" height="24" rx="3" fill="#43a047"/><circle cx="12.1" cy="3.9" r="3.9" fill="#43a047"/><circle cx="12.1" cy="3.9" r="1.4" fill="#fff"/><circle cx="12.1" cy="12.2" r="3.9" fill="#fff"/><path d="M4 24.3 Q4.5 18.4 12.1 18.4 Q19.7 18.4 20.2 24.3 Z" fill="#fff"/></svg>
<div class="b" style="left:432px;top:1298px;width:2416px;height:112px;background:#fff;border-radius:8px;box-shadow:0 1px 5px rgba(0,0,0,0.2),0 2px 2px rgba(0,0,0,0.14),0 3px 1px -2px rgba(0,0,0,0.12)"></div>
<svg class="i" style="left:2401.5px;top:1347.5px;width:20.5px;height:10.5px;" viewBox="0 0 20 10" preserveAspectRatio="none"><path d="M0 0 H20 L10 10 Z" fill="#6e6e6e"/></svg>
<svg class="i" style="left:2691.5px;top:1341px;width:17px;height:24px;" viewBox="0 0 17 24" preserveAspectRatio="none"><path d="M15 1.5 L4 12 L15 22.5" fill="none" stroke="#c0c0c0" stroke-width="4"/></svg>
<svg class="i" style="left:2788px;top:1341px;width:17px;height:24px;" viewBox="0 0 17 24" preserveAspectRatio="none"><path d="M2 1.5 L13 12 L2 22.5" fill="none" stroke="#616161" stroke-width="4"/></svg>
<div class="b" style="left:400px;top:1730px;width:2480px;height:70px;background:#e4e4e4;border-top:2px solid #d4d4d4;box-sizing:border-box"></div>
<svg class="i" style="left:447.5px;top:1750px;width:30px;height:24.5px;" viewBox="0 0 30 24.5" preserveAspectRatio="none"><path d="M1.5 12.5 L15 2 L28.5 12.5" fill="none" stroke="#5f6b70" stroke-width="3.4"/><rect x="21" y="0.5" width="4" height="7" fill="#5f6b70"/><path d="M5.5 13 L15 5.8 L24.5 13 V24 H18 V17.5 H12 V24 H5.5 Z" fill="#5f6b70"/></svg>
<svg class="i" style="left:2794px;top:1757px;width:21px;height:15px;" viewBox="0 0 21 15" preserveAspectRatio="none"><path d="M2 2.5 L10.5 11.5 L19 2.5" fill="none" stroke="#424242" stroke-width="3.2"/></svg>
<div id="txt" style="position:absolute;left:0;top:0;width:2880px;height:1800px;will-change:transform">
<div class="t" style="left:535.24px;top:23.75px;font-size:32px;line-height:32px;color:#f4f5fb;font-weight:700;transform:scaleX(0.8785)">DLS RENTACAR</div>
<div class="t" style="left:762.00px;top:31.50px;font-size:25px;line-height:25px;color:#f4f5fb;font-weight:700">/ CASA MATRIZ</div>
<div class="t" style="left:33.21px;top:183.50px;font-size:29px;line-height:29px;color:#97a1a6;transform:scaleX(0.8954)">Buscar...</div>
<div class="t" style="left:119.28px;top:334.30px;font-size:23px;line-height:23px;color:#ffffff;transform:scaleX(1.1098)">Inicio</div>
<div class="t" style="left:121.00px;top:400.50px;font-size:23px;line-height:23px;color:#ffffff;transform:scaleX(1.0248)">Administración</div>
<div class="t" style="left:120.01px;top:470.20px;font-size:23px;line-height:23px;color:#ffffff;transform:scaleX(0.9857)">Cliente</div>
<div class="t" style="left:108.76px;top:554.30px;font-size:23px;line-height:23px;color:#ffffff;transform:scaleX(1.0215)">Escritorio</div>
<div class="t" style="left:108.81px;top:636.00px;font-size:23px;line-height:23px;color:#ffffff;transform:scaleX(0.9955)">Fuerza de Ventas</div>
<div class="t" style="left:109.83px;top:718.50px;font-size:23px;line-height:23px;color:#ffffff;transform:scaleX(0.9749)">Gestión de Leads</div>
<div class="t" style="left:109.82px;top:800.20px;font-size:23px;line-height:23px;color:#ffffff;transform:scaleX(0.9819)">Gestión de Clientes</div>
<div class="t" style="left:109.28px;top:882.30px;font-size:23px;line-height:23px;color:#ffffff;transform:scaleX(1.0079)">Documentos</div>
<div class="t" style="left:110.50px;top:964.00px;font-size:23px;line-height:23px;color:#ffffff;transform:scaleX(0.9911)">Agenda</div>
<div class="t" style="left:109.28px;top:1046.00px;font-size:23px;line-height:23px;color:#ffffff;transform:scaleX(1.0077)">Reportes</div>
<div class="t" style="left:119.85px;top:1114.30px;font-size:23px;line-height:23px;color:#9aa3a8;transform:scaleX(0.9531)">Compra</div>
<div class="t" style="left:117.69px;top:1183.80px;font-size:23px;line-height:23px;color:#9aa3a8;transform:scaleX(1.0144)">Contabilidad</div>
<div class="t" style="left:118.77px;top:1254.00px;font-size:23px;line-height:23px;color:#9aa3a8;transform:scaleX(1.0172)">Indicadores</div>
<div class="t" style="left:120.80px;top:1323.50px;font-size:23px;line-height:23px;color:#9aa3a8;transform:scaleX(1.0466)">Talento</div>
<div class="t" style="left:119.22px;top:1393.50px;font-size:23px;line-height:23px;color:#ffffff;transform:scaleX(1.0408)">Inventario</div>
<div class="t" style="left:120.80px;top:1463.50px;font-size:23px;line-height:23px;color:#9aa3a8;transform:scaleX(0.9898)">Venta</div>
<div class="t" style="left:486.93px;top:136.00px;font-size:40px;line-height:40px;color:#1b2a30;transform:scaleX(0.9563);-webkit-text-stroke:1px #1b2a30">LEADS</div>
<div class="t" style="left:1946.68px;top:155.30px;font-size:34px;line-height:34px;color:#8c8c8c;transform:scaleX(0.9389)">Buscar...</div>
<div class="t" style="left:2500.70px;top:160.00px;font-size:26px;line-height:26px;color:#3f4a4f;transform:scaleX(0.7874);-webkit-text-stroke:0.7px #3f4a4f">ACCIONES</div>
<div class="t" style="left:444.88px;top:291.50px;font-size:22px;line-height:22px;color:#6e6e6e;transform:scaleX(0.9123)">FECHA</div>
<div class="t" style="left:479.54px;top:362.20px;font-size:28px;line-height:28px;color:#303f9f;transform:scaleX(0.9611);-webkit-text-stroke:0.4px #303f9f">Todas las Tareas</div>
<div class="t" style="left:809.37px;top:362.20px;font-size:28px;line-height:28px;color:#444444;transform:scaleX(0.9300)">Tareas del Día</div>
<div class="t" style="left:1106.85px;top:362.20px;font-size:28px;line-height:28px;color:#444444;transform:scaleX(0.9453)">Tareas a Vencer</div>
<div class="t" style="left:1426.04px;top:362.20px;font-size:28px;line-height:28px;color:#444444;transform:scaleX(0.9574)">Tareas Vencidas</div>
<div class="t" style="left:583.18px;top:455.00px;font-size:28px;line-height:28px;color:#071a6f;font-weight:700;transform:scaleX(0.9088)">Estado del Lead</div>
<div class="t" style="left:1010.16px;top:455.25px;font-size:28px;line-height:28px;color:#071a6f;font-weight:700;transform:scaleX(0.9199)">Nombre</div>
<div class="t" style="left:1340.63px;top:455.25px;font-size:28px;line-height:28px;color:#071a6f;font-weight:700;transform:scaleX(0.9331)">Email</div>
<div class="t" style="left:1715.50px;top:455.25px;font-size:28px;line-height:28px;color:#071a6f;font-weight:700;transform:scaleX(0.9276)">Teléfono</div>
<div class="t" style="left:2055.36px;top:455.25px;font-size:28px;line-height:28px;color:#071a6f;font-weight:700;transform:scaleX(0.8889)">Ciudad del Contacto</div>
<div class="t" style="left:2530.35px;top:455.25px;font-size:28px;line-height:28px;color:#071a6f;font-weight:700;transform:scaleX(0.9004)">Origen del Prospecto</div>
<div class="t" style="left:586.51px;top:539.25px;font-size:23px;line-height:23px;color:#212529;transform:scaleX(0.9934)">No Gestionado</div>
<div class="t" style="left:974.48px;top:539.25px;font-size:23px;line-height:23px;color:#212529;transform:scaleX(1.0190)">dave grohl</div>
<div class="t" style="left:1304.52px;top:539.25px;font-size:23px;line-height:23px;color:#212529;transform:scaleX(0.9816)">dave@mail.com</div>
<div class="t" style="left:1678.44px;top:539.25px;font-size:23px;line-height:23px;color:#212529;transform:scaleX(1.0553)">962456123</div>
<div class="t" style="left:2494.06px;top:539.25px;font-size:23px;line-height:23px;color:#212529;transform:scaleX(0.9359)">SITIO WEB</div>
<div class="t" style="left:586.51px;top:611.25px;font-size:23px;line-height:23px;color:#212529;transform:scaleX(0.9934)">No Gestionado</div>
<div class="t" style="left:975.50px;top:611.25px;font-size:23px;line-height:23px;color:#212529;transform:scaleX(1.0270)">test</div>
<div class="t" style="left:2493.06px;top:611.25px;font-size:23px;line-height:23px;color:#212529;transform:scaleX(0.9679)">INSTAGRAM</div>
<div class="t" style="left:586.51px;top:683.25px;font-size:23px;line-height:23px;color:#212529;transform:scaleX(0.9934)">No Gestionado</div>
<div class="t" style="left:975.50px;top:683.25px;font-size:23px;line-height:23px;color:#212529;transform:scaleX(1.0095)">Test</div>
<div class="t" style="left:586.51px;top:755.25px;font-size:23px;line-height:23px;color:#212529;transform:scaleX(0.9934)">No Gestionado</div>
<div class="t" style="left:974.48px;top:755.25px;font-size:23px;line-height:23px;color:#212529;transform:scaleX(1.0198)">amanad</div>
<div class="t" style="left:587.50px;top:827.25px;font-size:23px;line-height:23px;color:#212529;transform:scaleX(1.0034)">Gestionado</div>
<div class="t" style="left:974.47px;top:827.25px;font-size:23px;line-height:23px;color:#212529;transform:scaleX(1.0267)">alen test</div>
<div class="t" style="left:1304.49px;top:827.25px;font-size:23px;line-height:23px;color:#212529;transform:scaleX(1.0110)">alenmartinezsb@gmail.com</div>
<div class="t" style="left:1678.44px;top:827.25px;font-size:23px;line-height:23px;color:#212529;transform:scaleX(1.0553)">962785612</div>
<div class="t" style="left:2494.03px;top:827.25px;font-size:23px;line-height:23px;color:#212529;transform:scaleX(0.9746)">Campana Marzo Localiza PY 2</div>
<div class="t" style="left:586.51px;top:899.25px;font-size:23px;line-height:23px;color:#212529;transform:scaleX(0.9934)">No Gestionado</div>
<div class="t" style="left:587.52px;top:971.25px;font-size:23px;line-height:23px;color:#212529;transform:scaleX(0.9790)">Cerrado</div>
<div class="t" style="left:973.34px;top:971.25px;font-size:23px;line-height:23px;color:#212529;transform:scaleX(1.0778)">rafael</div>
<div class="t" style="left:586.51px;top:1043.25px;font-size:23px;line-height:23px;color:#212529;transform:scaleX(0.9934)">No Gestionado</div>
<div class="t" style="left:587.50px;top:1115.25px;font-size:23px;line-height:23px;color:#212529;transform:scaleX(1.0034)">Gestionado</div>
<div class="t" style="left:974.49px;top:1115.25px;font-size:23px;line-height:23px;color:#212529;transform:scaleX(1.0127)">prueba</div>
<div class="t" style="left:1304.50px;top:1115.25px;font-size:23px;line-height:23px;color:#212529">prueba@mail.com</div>
<div class="t" style="left:1678.44px;top:1115.25px;font-size:23px;line-height:23px;color:#212529;transform:scaleX(1.0553)">962123456</div>
<div class="t" style="left:2018.47px;top:1115.25px;font-size:23px;line-height:23px;color:#212529;transform:scaleX(0.9333)">COLONIA YGUAZU</div>
<div class="t" style="left:2493.06px;top:1115.25px;font-size:23px;line-height:23px;color:#212529;transform:scaleX(0.9679)">INSTAGRAM</div>
<div class="t" style="left:587.50px;top:1187.25px;font-size:23px;line-height:23px;color:#212529;transform:scaleX(1.0034)">Gestionado</div>
<div class="t" style="left:974.47px;top:1187.25px;font-size:23px;line-height:23px;color:#212529;transform:scaleX(1.0267)">alen test</div>
<div class="t" style="left:1304.49px;top:1187.25px;font-size:23px;line-height:23px;color:#212529;transform:scaleX(1.0110)">alenmartinezsb@gmail.com</div>
<div class="t" style="left:1678.46px;top:1187.25px;font-size:23px;line-height:23px;color:#212529;transform:scaleX(1.0409)">9620564123156</div>
<div class="t" style="left:2144.84px;top:1341.20px;font-size:27px;line-height:27px;color:#747474;transform:scaleX(0.9279)">Filas por página</div>
<div class="t" style="left:2362.56px;top:1341.20px;font-size:27px;line-height:27px;color:#5e5e5e;transform:scaleX(0.8704)">10</div>
<div class="t" style="left:2497.22px;top:1341.20px;font-size:27px;line-height:27px;color:#6a6a6a;transform:scaleX(0.8881)">1-10 de 79</div>
<div class="t" style="left:483.52px;top:1753.30px;font-size:26px;line-height:26px;color:#5b686e;transform:scaleX(0.9914)">Inicio</div>
<div class="t" style="left:560.00px;top:1753.30px;font-size:26px;line-height:26px;color:#5b686e;transform:scaleX(1.4000)">/</div>
<div class="t" style="left:585.55px;top:1753.30px;font-size:26px;line-height:26px;color:#5b686e;transform:scaleX(0.9506)">Cliente</div>
<div class="t" style="left:679.00px;top:1753.30px;font-size:26px;line-height:26px;color:#5b686e;transform:scaleX(1.4143)">/</div>
<div class="t" style="left:703.89px;top:1753.30px;font-size:26px;line-height:26px;color:#303f9f;font-weight:700;transform:scaleX(0.9028)">Leads</div>
<div class="t" style="left:2551.90px;top:1750.40px;font-size:26px;line-height:26px;color:#7a7a7a;transform:scaleX(0.7966)">© DLS TECHNOLOGY</div>
</div>
</body></html>
